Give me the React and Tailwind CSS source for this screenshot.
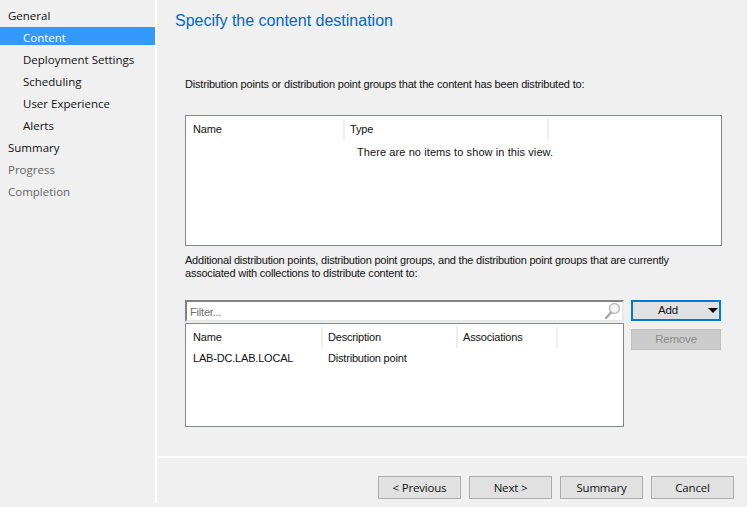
import React from 'react'

const steps = [
  { label: 'General', cls: 'pl-2 text-[#111]' },
  { label: 'Content', cls: 'pl-[23px] bg-[#3399ff] text-white' },
  { label: 'Deployment Settings', cls: 'pl-[23px] text-[#111]' },
  { label: 'Scheduling', cls: 'pl-[23px] text-[#111]' },
  { label: 'User Experience', cls: 'pl-[23px] text-[#111]' },
  { label: 'Alerts', cls: 'pl-[23px] text-[#111]' },
  { label: 'Summary', cls: 'pl-2 text-[#111]' },
  { label: 'Progress', cls: 'pl-2 text-[#666]' },
  { label: 'Completion', cls: 'pl-2 text-[#666]' },
]

function Column({ title, width, first }) {
  return (
    <div style={{ width, paddingLeft: first ? 7 : 5 }} className="h-[22px] shrink-0 border-r-2 border-[#efefef] leading-[23px]">
      {title}
    </div>
  )
}

function FooterButton({ children }) {
  return (
    <button className="w-[83px] h-[23px] bg-[#e1e1e1] border border-[#adadad] text-[11.5px] text-[#111] font-['Open_Sans',sans-serif] leading-none">
      {children}
    </button>
  )
}

export default function App() {
  return (
    <div className="flex w-[747px] h-[507px] bg-[#f0f0f0] overflow-hidden font-['Liberation_Sans',sans-serif] text-[11px] tracking-[-0.19px] text-[#111]">
      <div className="w-[157px] h-[503px] shrink-0 border-r-2 border-white pt-[5px] font-['Open_Sans',sans-serif] text-[11.5px] tracking-normal">
        {steps.map(s => (
          <div key={s.label} className={`h-[18px] mb-1 leading-[21px] ${s.cls}`}>
            {s.label}
          </div>
        ))}
      </div>

      <div className="flex-1 flex flex-col">
        <div className="h-[456px] pl-[18px] pr-[25px] border-b-2 border-white box-content shrink-0">
          <h1 className="pt-[11px] h-[40px] text-[16px] leading-[19px] tracking-normal text-[#0066cc]">Specify the content destination</h1>

          <div className="pl-[10px]">
            <p className="mt-[36px] h-[16px] leading-[16px]">
              Distribution points or distribution point groups that the content has been distributed to:
            </p>

            <div className="mt-[23px] h-[131px] w-[537px] bg-white border border-[#828790] pt-[2px]">
              <div className="flex">
                <Column title="Name" width={159} first />
                <Column title="Type" width={204} />
              </div>
              <p className="pl-[171px] mt-[3px] leading-[19px] tracking-[0.09px]">There are no items to show in this view.</p>
            </div>

            <p className="mt-[8px] h-[26px] leading-[13px] w-[490px] tracking-[-0.22px]">
              Additional distribution points, distribution point groups, and the distribution point groups that are currently associated with collections to distribute content to:
            </p>

            <div className="mt-[20px] flex gap-[7px]">
              <div className="w-[439px] shrink-0">
                <div className="h-[22px] flex items-center justify-between bg-white border-2 border-[#e8e8e8] border-t-[#828282] border-l-[#828282] pl-[3px] pr-[1px]">
                  <span className="text-[#6d6d6d] pt-[2px]">Filter...</span>
                  <svg width="17" height="18" viewBox="0 0 17 18" fill="none">
                    <circle cx="10.5" cy="6.5" r="5" stroke="#bdbdbd" strokeWidth="1.6" fill="#f7f7f7" />
                    <path d="M7 10.5 2 16" stroke="#a8a8a8" strokeWidth="2.4" strokeLinecap="round" />
                  </svg>
                </div>
                <div className="mt-px h-[104px] bg-white border border-[#828790] pt-[2px]">
                  <div className="flex">
                    <Column title="Name" width={137} first />
                    <Column title="Description" width={135} />
                    <Column title="Associations" width={100} />
                  </div>
                  <div className="flex h-[20px] leading-[21px]">
                    <div className="w-[137px] pl-[7px]">LAB-DC.LAB.LOCAL</div>
                    <div className="pl-[5px]">Distribution point</div>
                  </div>
                </div>
              </div>

              <div className="w-[90px] flex flex-col gap-2 shrink-0">
                <button className="relative h-[21px] pr-[16px] bg-[#e1e1e1] border-2 border-[#0078d7] text-[11.5px] leading-none text-[#111]">
                  Add
                  <span className="absolute right-[1px] top-[6px] w-0 h-0 border-x-[5px] border-x-transparent border-t-[5px] border-t-black" />
                </button>
                <button className="h-[21px] bg-[#cccccc] border border-[#bfbfbf] text-[11.5px] leading-none text-[#8a8a8a]">
                  Remove
                </button>
              </div>
            </div>
          </div>
        </div>

        <div className="flex gap-2 justify-end pr-[13px] pt-[18px]">
          <FooterButton>&lt; Previous</FooterButton>
          <FooterButton>Next &gt;</FooterButton>
          <FooterButton>Summary</FooterButton>
          <FooterButton>Cancel</FooterButton>
        </div>
      </div>
    </div>
  )
}
